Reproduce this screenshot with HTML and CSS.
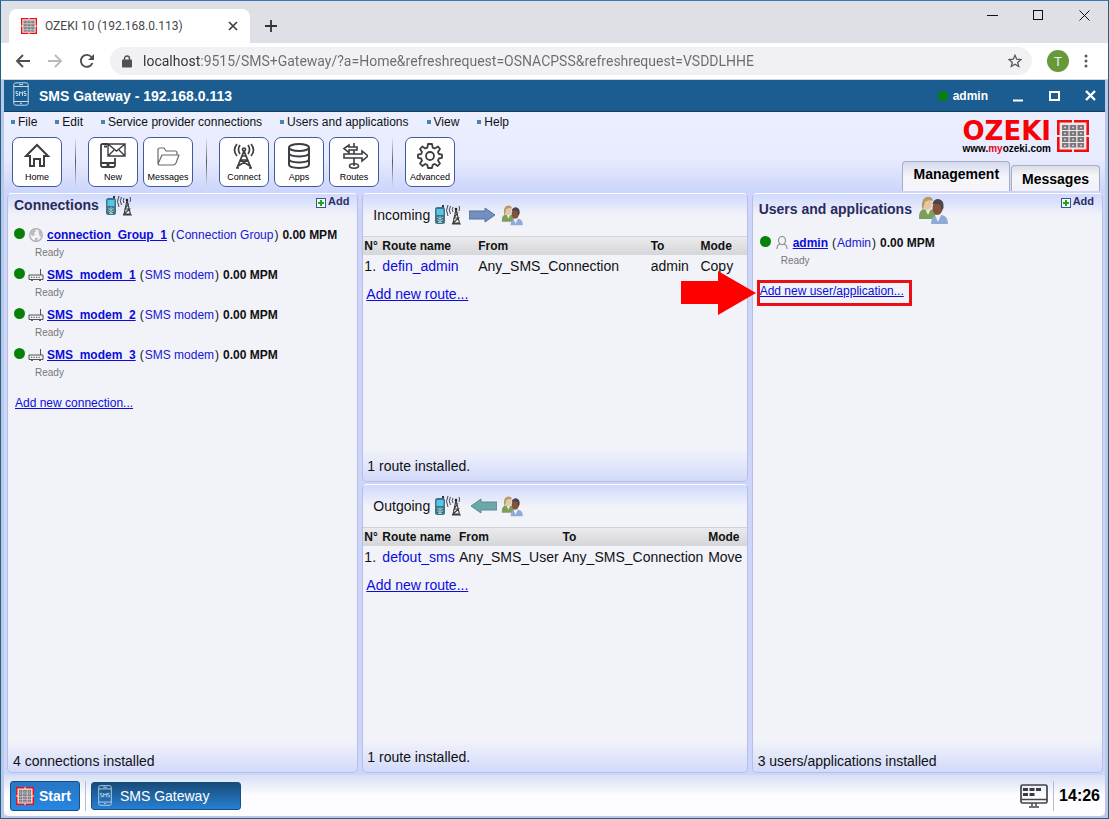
FILE: index.html
```html
<!DOCTYPE html>
<html lang="en">
<head>
<meta charset="utf-8">
<title>OZEKI 10 (192.168.0.113)</title>
<link rel="stylesheet" href="styles.css">
</head>
<body>
<svg class="defs" aria-hidden="true">
  <symbol id="keypad" viewBox="0 0 32 32">
    <rect width="32" height="32" fill="#f3e4e6"/>
    <path d="M1.300 15V1.300H15M17 1.300H30.700V15M30.700 17V30.700H17M15 30.700H1.300V17" fill="none" stroke="#f00d12" stroke-width="2.600"/>
    <g fill="#77777d"><path d="M5 5h6.500v5H5zM12.700 5h6.500v5h-6.500zM20.500 5h6.500v5h-6.500zM5 11h6.500v5H5zM12.700 11h6.500v5h-6.500zM20.500 11h6.500v5h-6.500zM5 17h6.500v5H5zM12.700 17h6.500v5h-6.500zM20.500 17h6.500v5h-6.500zM5 23h6.500v4.500H5zM12.700 23h6.500v4.500h-6.500zM20.500 23h6.500v4.500h-6.500z"/></g>
    <path d="M7 7.500h2M15 7.500h2M23 7.500h2M7 13.500h2M15 13.500h2M23 13.500h2M7 19.500h2M15 19.500h2M23 19.500h2M7 25.500h2M15 25.500h2M23 25.500h2" stroke="#d0d0d4" stroke-width="1.600"/>
  </symbol>
  <symbol id="sms" viewBox="0 0 16 24">
    <g fill="none" stroke="#c4dcec"><rect x=".8" y=".8" width="14.400" height="22.400" rx="2"/><path d="M1 4.500h14M1 19.500h14M6 2.600h4M7 21.300h2"/></g>
    <g fill="none" stroke="#c4dcec" stroke-width=".9"><path d="M5 9.500H3v2h2v2H3M6.500 14V9.500L8 11.500l1.500-2V14M13 9.500h-2v2h2v2h-2"/></g>
  </symbol>
  <symbol id="people" viewBox="0 0 30 29">
    <path d="M1 21q0-7 5-8l4 2 5-2q3 1 3 7v3H1z" fill="#7e9f5a"/>
    <path d="M7 12h6l-3 7z" fill="#f2efe6"/>
    <ellipse cx="9.500" cy="7.500" rx="4.500" ry="6.500" fill="#e6c7a4"/>
    <path d="M4 12Q3 2 9 1q5-1 6 4-4-2-8 1-1 4-2 8z" fill="#b99b62"/>
    <path d="M13 28q0-8 6-9h5q6 1 6 9z" fill="#8eabd8"/>
    <path d="M17 19h6l-3 7z" fill="#eef2fa"/>
    <ellipse cx="19.500" cy="12" rx="5" ry="7" fill="#84513c"/>
    <path d="M14.500 8q1-5 6-5 6 1 5 9l-2 3-1-6q-4-2-8-1z" fill="#494548"/>
  </symbol>
  <symbol id="provider" viewBox="0 0 26 20">
    <path d="M7 0h2v4H7z" fill="#24363e"/>
    <rect x="0" y="2" width="10" height="17" rx="2.500" fill="#3e7484"/>
    <rect x="1.500" y="4" width="7" height="6" fill="#55c5e8"/>
    <path d="M2 12l3 2 3-2M2 14.500l3 2 3-2M3 17.500h4M5 11v7" fill="none" stroke="#b3e1e5" stroke-width=".8"/>
    <g fill="none" stroke="#333" stroke-width=".9"><path d="M18 2q-1.500 2.500 0 5M15.500 1q-2.500 3.500 0 8M13 0q-3 5 0 11M24 1q1.200 2 0 5"/></g>
    <g fill="none" stroke="#3c3c3c" stroke-width="1.100"><path d="M21 4l-3 14.500M21 4l3.500 14.500M20 8h2.500l-3.500 5h4.500L18 18h6.500M17 19h9"/></g>
    <circle cx="21" cy="4" r="1.300" fill="#222"/>
  </symbol>
  <symbol id="modem" viewBox="0 0 16 12">
    <path d="M1 6h14v4.500H1zM12.500 6V0" fill="none" stroke="#555"/>
    <path d="M3 8.300h1.300M5.500 8.300h1.300M8 8.300h1.300M10.500 8.300h1.300M3 11.300h2M11 11.300h2" stroke="#444"/>
  </symbol>
  <symbol id="plus" viewBox="0 0 10 10">
    <rect x=".5" y=".5" width="9" height="9" fill="#f6fff4" stroke="#35588c"/>
    <path d="M5 2v6M2 5h6" stroke="#22a61d" stroke-width="2"/>
  </symbol>
</svg>

<header class="browser">
  <div class="tabstrip">
    <div class="browser-tab">
      <svg class="ico16"><use href="#keypad"/></svg>
      <span class="tab-title">OZEKI 10 (192.168.0.113)</span>
      <button class="plain" aria-label="Close tab"><svg width="10" height="10" viewBox="0 0 10 10"><path d="M1 1l8 8M9 1L1 9" stroke="#3c4043" stroke-width="1.700"/></svg></button>
    </div>
    <button class="plain new-tab" aria-label="New tab"><svg width="12" height="12" viewBox="0 0 12 12"><path d="M6 0v12M0 6h12" stroke="#333" stroke-width="1.800"/></svg></button>
    <div class="window-buttons">
      <button class="plain" aria-label="Minimize"><svg width="11" height="11"><path d="M0 5.500h11" stroke="#111"/></svg></button>
      <button class="plain" aria-label="Maximize"><svg width="11" height="11"><rect x=".5" y=".5" width="9" height="9" fill="none" stroke="#111"/></svg></button>
      <button class="plain" aria-label="Close"><svg width="11" height="11"><path d="M.5.500l10 10M10.500.500l-10 10" stroke="#111"/></svg></button>
    </div>
  </div>
  <div class="navbar">
    <button class="plain" aria-label="Back"><svg width="16" height="16" viewBox="0 0 16 16"><path d="M15 8H2M8 2L2 8l6 6" fill="none" stroke="#4c4f53" stroke-width="1.900"/></svg></button>
    <button class="plain" aria-label="Forward"><svg width="16" height="16" viewBox="0 0 16 16"><path d="M1 8h13M8 2l6 6-6 6" fill="none" stroke="#b9babd" stroke-width="1.900"/></svg></button>
    <button class="plain" aria-label="Reload"><svg width="16" height="16" viewBox="0 0 16 16"><path d="M13.500 10A6 6 0 1 1 12.500 4" fill="none" stroke="#4c4f53" stroke-width="1.900"/><path d="M15 1v6H9z" fill="#4c4f53"/></svg></button>
    <div class="address">
      <svg width="10" height="13" viewBox="0 0 10 13"><rect y="4.500" width="10" height="8" rx="1" fill="#4d5054"/><path d="M2.500 5V3.500a2.500 2.500 0 0 1 5 0V5" fill="none" stroke="#4d5054" stroke-width="1.400"/></svg>
      <input type="text" aria-label="Address" value="localhost:9515/SMS+Gateway/?a=Home&amp;refreshrequest=OSNACPSS&amp;refreshrequest=VSDDLHHE">
      <button class="plain" aria-label="Bookmark"><svg width="14" height="14" viewBox="0 0 14 14"><path d="M7 1.300l1.700 3.900 4.200.4-3.200 2.800 1 4.100L7 10.300l-3.700 2.200 1-4.100L1.100 5.600l4.200-.4z" fill="none" stroke="#55585c" stroke-width="1.300"/></svg></button>
    </div>
    <button class="avatar">T</button>
    <button class="plain" aria-label="Menu"><svg width="4" height="14" viewBox="0 0 4 14"><g fill="#55585c"><circle cx="2" cy="2" r="1.500"/><circle cx="2" cy="7" r="1.500"/><circle cx="2" cy="12" r="1.500"/></g></svg></button>
  </div>
</header>

<main class="app">
  <div class="titlebar">
    <svg width="16" height="24"><use href="#sms"/></svg>
    <h1>SMS Gateway - 192.168.0.113</h1>
    <span class="user"><i class="dot"></i>admin</span>
    <button class="plain" aria-label="Minimize window"><svg width="12" height="12"><path d="M1 10.500h10" stroke="#fff" stroke-width="2"/></svg></button>
    <button class="plain" aria-label="Maximize window"><svg width="12" height="12"><rect x="2" y="2" width="9" height="8" fill="none" stroke="#fff" stroke-width="2"/></svg></button>
    <button class="plain" aria-label="Close window"><svg width="12" height="12"><path d="M2 1l9 9M11 1l-9 9" stroke="#fff" stroke-width="2.400"/></svg></button>
  </div>

  <div class="topbar">
    <div class="tools">
      <nav class="menu">
        <a>File</a><a>Edit</a><a>Service provider connections</a><a>Users and applications</a><a>View</a><a>Help</a>
      </nav>
      <div class="toolbar">
        <button class="tool"><svg viewBox="0 0 28 28"><path d="M3 14L14 3l11 11h-4v10h-4v-7h-6v7H7V14z" fill="none" stroke="#3d3d42" stroke-width="2"/></svg>Home</button>
        <i class="sep"></i>
        <button class="tool"><svg viewBox="0 0 28 28"><g fill="none" stroke="#3d3d42" stroke-width="1.800"><path d="M9 2H3.500Q2 2 2 3.500v20Q2 25 3.500 25h11q1.500 0 1.500-1.500V16M2 21h14M7.500 23h3M5 4.500h3"/><path d="M9 2h17v12H9zM9 2l8.500 7L26 2M9 14l6-6M26 14l-6-6" stroke-width="1.400"/></g></svg>New</button>
        <button class="tool"><svg viewBox="0 0 28 28"><path d="M4 22V8q0-2 2-2h4l2 3h9q2 0 2 2v2M4 22l4-9h17l-3 8q-1 2-3 2H5z" fill="none" stroke="#696970" stroke-width="1.200" stroke-linejoin="round"/></svg>Messages</button>
        <i class="sep"></i>
        <button class="tool"><svg viewBox="0 0 28 28"><g fill="none" stroke="#3d3d42" stroke-width="1.700"><path d="M14 9L7 26M14 9l7 17M10 18h8M11.500 14h5M10 18l10 6M18 18L8 24M6 26h3M19 26h3"/><circle cx="14" cy="7.500" r="1.500"/><path d="M10 3q-3 4.500 0 9M7 2q-5 6 0 12M18 3q3 4.500 0 9M21 2q5 6 0 12"/></g></svg>Connect</button>
        <button class="tool"><svg viewBox="0 0 28 28"><g fill="none" stroke="#3d3d42" stroke-width="2"><ellipse cx="14" cy="5.500" rx="10" ry="3.500"/><path d="M4 5.500v17C4 27 24 27 24 22.500v-17M4 11c0 4.500 20 4.500 20 0M4 17c0 4.500 20 4.500 20 0"/></g></svg>Apps</button>
        <button class="tool"><svg viewBox="0 0 28 28"><g fill="#fff" stroke="#3d3d42" stroke-width="1.600"><ellipse cx="14" cy="24" rx="4.500" ry="2.200"/><path d="M14 1v23"/><path d="M4 12h18V9l6 5-6 5v-3H4zM17 8H9v2.500L4 6.500 9 3v2h8z"/></g></svg>Routes</button>
        <i class="sep"></i>
        <button class="tool"><svg viewBox="0 0 28 28"><g fill="none" stroke="#3d3d42" stroke-width="1.800" stroke-linejoin="round"><path d="M12 2h4l.7 3.600 2 .9L22 4.500 24 7l-2 3 .8 2 3.200.6v3.200l-3.200.7-.8 2 2 3-2.300 2.500-3-2-2 .8L16 26h-4l-.7-3.200-2-.8-3 2L4 21.500l2-3-.8-2-3.200-.7v-3.200l3.200-.6.8-2L4 7l2.300-2.500 3 2 2-.9z"/><circle cx="14" cy="14" r="4"/></g></svg>Advanced</button>
      </div>
    </div>
    <div class="brand">
      <a class="logo">
        <span class="logo-text"><b>OZEKI</b><small>www.<em>my</em>ozeki.com</small></span>
        <svg width="32" height="32"><use href="#keypad"/></svg>
      </a>
      <div class="view-tabs">
        <button class="view-tab active">Management</button>
        <button class="view-tab">Messages</button>
      </div>
    </div>
  </div>

  <div class="columns">
    <section class="panel side">
      <header class="panel-head">
        <h2>Connections</h2><svg width="26" height="20"><use href="#provider"/></svg>
        <a class="add"><svg width="10" height="10"><use href="#plus"/></svg>Add</a>
      </header>
      <ul class="list">
        <li><div class="entry"><i class="dot"></i><svg width="16" height="16" viewBox="0 0 16 16"><circle cx="8" cy="8" r="6.300" fill="none" stroke="#aaa" stroke-width="1.200"/><path d="M4 3l3-1 1 2-2 2 1 2-3 1-2-3zM10 3l3 2 1 4-2 1-1-3zM7 11l3 0-1 3H7z" fill="#bbb"/></svg><a href="#">connection_Group_1</a><span class="kind">(<i>Connection Group</i>)</span><b>0.00 MPM</b></div><p>Ready</p></li>
        <li><div class="entry"><i class="dot"></i><svg width="16" height="16" viewBox="0 -2 16 16"><use href="#modem" width="16" height="12"/></svg><a href="#">SMS_modem_1</a><span class="kind">(<i>SMS modem</i>)</span><b>0.00 MPM</b></div><p>Ready</p></li>
        <li><div class="entry"><i class="dot"></i><svg width="16" height="16" viewBox="0 -2 16 16"><use href="#modem" width="16" height="12"/></svg><a href="#">SMS_modem_2</a><span class="kind">(<i>SMS modem</i>)</span><b>0.00 MPM</b></div><p>Ready</p></li>
        <li><div class="entry"><i class="dot"></i><svg width="16" height="16" viewBox="0 -2 16 16"><use href="#modem" width="16" height="12"/></svg><a href="#">SMS_modem_3</a><span class="kind">(<i>SMS modem</i>)</span><b>0.00 MPM</b></div><p>Ready</p></li>
      </ul>
      <a class="add-new" href="#">Add new connection...</a>
      <footer>4 connections installed</footer>
    </section>

    <div class="middle">
      <section class="panel">
        <header class="route-head">Incoming
          <svg width="26" height="20"><use href="#provider"/></svg>
          <svg width="26" height="16" viewBox="0 0 26 16"><path d="M0 4h16V1l10 7-10 7v-3H0z" fill="#7190bd" stroke="#58739b"/></svg>
          <svg width="22" height="21"><use href="#people"/></svg>
        </header>
        <table class="routes incoming">
          <thead><tr><th>N°</th><th>Route name</th><th>From</th><th>To</th><th>Mode</th></tr></thead>
          <tbody><tr><td>1.</td><td><a href="#">defin_admin</a></td><td>Any_SMS_Connection</td><td>admin</td><td>Copy</td></tr></tbody>
        </table>
        <a class="add-route" href="#">Add new route...</a>
        <footer>1 route installed.</footer>
      </section>
      <section class="panel">
        <header class="route-head">Outgoing
          <svg width="26" height="20"><use href="#provider"/></svg>
          <svg class="back" width="26" height="16" viewBox="0 0 26 16"><path d="M26 4H10V1L0 8l10 7v-3h16z" fill="#6aa9a8" stroke="#5a8990"/></svg>
          <svg width="22" height="21"><use href="#people"/></svg>
        </header>
        <table class="routes outgoing">
          <thead><tr><th>N°</th><th>Route name</th><th>From</th><th>To</th><th>Mode</th></tr></thead>
          <tbody><tr><td>1.</td><td><a href="#">defout_sms</a></td><td>Any_SMS_User</td><td>Any_SMS_Connection</td><td>Move</td></tr></tbody>
        </table>
        <a class="add-route" href="#">Add new route...</a>
        <footer>1 route installed.</footer>
      </section>
    </div>

    <section class="panel side users">
      <header class="panel-head">
        <h2>Users and applications</h2><svg width="30" height="29"><use href="#people"/></svg>
        <a class="add"><svg width="10" height="10"><use href="#plus"/></svg>Add</a>
      </header>
      <ul class="list">
        <li><div class="entry"><i class="dot"></i><svg width="16" height="16" viewBox="0 0 16 16"><g fill="none" stroke="#888" stroke-width="1.100"><ellipse cx="8" cy="5.500" rx="3.500" ry="4"/><path d="M3 14q0-4 3-5M13 14q0-4-3-5"/></g></svg><a href="#">admin</a><span class="kind">(<i>Admin</i>)</span><b>0.00 MPM</b></div><p>Ready</p></li>
      </ul>
      <div class="callout">
        <a href="#">Add new user/application...</a>
        <svg class="pointer" width="76" height="46" viewBox="0 0 76 46"><path d="M0 11h37V1l38 22-38 22V34H0z" fill="#fe0000"/></svg>
      </div>
      <footer>3 users/applications installed</footer>
    </section>
  </div>

  <div class="taskbar">
    <button class="start"><svg class="ico18"><use href="#keypad"/></svg>Start</button>
    <i class="task-sep"></i>
    <button class="task"><svg width="14" height="21"><use href="#sms"/></svg>SMS Gateway</button>
    <svg class="desktop" width="28" height="24" viewBox="0 0 28 24"><rect x="1" y="1" width="26" height="18" rx="1.500" fill="none" stroke="#44444a" stroke-width="1.700"/><path d="M1 15.500h26M12 19v3M16 19v3M9 23h10" stroke="#44444a" stroke-width="1.500"/><path d="M3 4h5v3H3zM9.500 4h5v3h-5zM16 4h5v3h-5zM3 9h5v3H3zM9.500 9h5v3h-5z" fill="#3b3b40"/></svg>
    <time>14:26</time>
  </div>
</main>
</body>
</html>
```
FILE: styles.css
```css
* { box-sizing: border-box; }

body {
  margin: 0;
  min-height: 100vh;
  display: flex;
  flex-direction: column;
  border: 1px solid #1f6283;
  border-top-color: #3a78b5;
  background: #fff;
  color: #111;
  font-family: "Liberation Sans", Arial, sans-serif;
  font-size: 14px;
}

.defs { position: absolute; width: 0; height: 0; }
svg { display: block; flex: none; }
h1, h2, p, ul { margin: 0; padding: 0; }
button { font: inherit; }
a { color: #0c0cdc; }
.plain { display: flex; padding: 0; border: 0; background: none; }
.dot { width: 11px; height: 11px; border-radius: 50%; background: #078007; }
.ico16 { width: 16px; height: 16px; }
.ico18 { width: 18px; height: 18px; }

/* Browser frame */
.tabstrip {
  display: flex;
  align-items: flex-end;
  height: 42px;
  padding: 0 18px 0 8px;
  background: #dfe0e6;
}
.browser-tab {
  display: flex;
  align-items: center;
  gap: 8px;
  width: 241px;
  height: 34px;
  padding: 0 12px;
  border-radius: 8px 8px 0 0;
  background: #fff;
}
.tab-title { flex: 1; color: #45474a; font: 12px Roboto, sans-serif; white-space: nowrap; }
.new-tab { margin: 0 0 11px 15px; }
.window-buttons { display: flex; gap: 35px; margin: 0 0 22px auto; }
.navbar {
  display: flex;
  align-items: center;
  gap: 16px;
  height: 37px;
  padding: 0 20px 0 14px;
  border-bottom: 1px solid #d3d5dc;
}
.address {
  flex: 1;
  display: flex;
  align-items: center;
  gap: 11px;
  height: 28px;
  margin: 0 -1px;
  padding: 0 10px 0 12px;
  border-radius: 14px;
  background: #f1f1f4;
}
.address input {
  flex: 1;
  min-width: 0;
  padding: 0;
  border: 0;
  background: linear-gradient(to right, #303236 58px, #696b70 58px) text;
  color: transparent;
  font: 14px Roboto, sans-serif;
}
.avatar {
  width: 22px;
  height: 22px;
  margin-right: -1px;
  padding: 0;
  border: 0;
  border-radius: 50%;
  background: #65993a;
  color: #eef5e6;
  font-size: 13px;
}

/* Application window */
.app {
  flex: 1;
  display: flex;
  flex-direction: column;
  border: solid #bcc8e9;
  border-width: 0 3px 2px;
  background: #cdd5fa;
}
.titlebar {
  display: flex;
  align-items: center;
  gap: 24px;
  height: 32px;
  padding: 0 9px 4px;
  border-bottom: 1px solid #143e5e;
  background: #1b5d91;
  color: #fff;
}
.titlebar h1 { flex: 1; margin: 4px 0 0 -14px; font-size: 14px; line-height: 16px; }
.titlebar .plain, .titlebar .user { margin-top: 4px; }
.titlebar .user { display: flex; align-items: center; gap: 5px; font-size: 12px; font-weight: bold; }
.titlebar .dot { width: 10px; height: 10px; }

.topbar {
  display: flex;
  justify-content: space-between;
  height: 79px;
  background: linear-gradient(#ecefff, #e8ebfe 60%, #ccd5fb);
}
.menu { display: flex; gap: 18px; padding: 2px 0 0 7px; font-size: 12px; line-height: 16px; }
.menu a { display: flex; align-items: center; gap: 3px; color: #111; }
.menu a::before { content: ""; width: 4px; height: 4px; background: #4782b4; }
.toolbar { display: flex; gap: 5px; padding: 7px 0 0 8px; }
.tool {
  display: flex;
  flex-direction: column;
  align-items: center;
  justify-content: space-between;
  width: 50px;
  height: 50px;
  padding: 4px 0 3px;
  border: 1px solid #3e5b9c;
  border-radius: 7px;
  background: #fff;
  color: #000;
  font-size: 9px;
  line-height: 11px;
}
.tool svg { width: 28px; height: 28px; }
.sep { width: 1px; margin: 0 7px 0 8px; background: linear-gradient(transparent, #55596c, transparent); }
.brand { display: flex; flex-direction: column; justify-content: space-between; padding-right: 5px; }
.logo { display: flex; justify-content: flex-end; gap: 6px; padding: 8px 11px 0 0; color: #000; }
.logo-text { display: flex; flex-direction: column; }
.logo-text b { color: #f80006; font: bold 26px/22px "DejaVu Sans", sans-serif; }
.logo-text small { font-size: 10px; font-weight: bold; line-height: 14px; }
.logo-text em { color: #e1061b; font-style: normal; }
.view-tabs { display: flex; align-items: flex-end; gap: 1px; }
.view-tab {
  height: 26px;
  padding: 0 10px;
  border: 1px solid #a5acc5;
  border-bottom: 0;
  border-radius: 4px 4px 0 0;
  background: linear-gradient(#dcdde5, #f6f6f9 40%, #f0f1f8);
  color: #000;
  font-size: 14px;
  font-weight: bold;
}
.view-tab.active { height: 30px; padding-bottom: 5px; background: linear-gradient(#d5d9ee, #f5f5fa 50%); }

.columns { flex: 1; display: flex; gap: 4px; padding: 2px 2px 2px 3px; }
.side { flex: 350; }
.middle { flex: 386; display: flex; flex-direction: column; gap: 2px; }
.middle .panel { flex: 1; }
.panel {
  display: flex;
  flex-direction: column;
  min-width: 0;
  border: 1px solid #b7c0e4;
  border-top-color: #fff;
  border-radius: 5px;
  background: linear-gradient(#cfd9fd, #f2f3f9 22px, #f2f3f9 calc(100% - 32px), #d2dafb);
}
.panel footer { margin-top: auto; padding: 0 4px 7px; line-height: 16px; }
.panel.side footer { padding: 0 5px 3px; }
.panel-head { display: flex; align-items: flex-start; gap: 7px; padding: 2px 8px 0 6px; }
.panel-head h2 { margin-top: 1px; color: #2a2a5c; font-size: 14px; line-height: 16px; }
.users .panel-head { gap: 6px; padding-left: 6px; }
.users .panel-head h2 { margin-top: 5px; }
.add { display: flex; align-items: center; gap: 2px; margin: -3px 0 0 auto; color: #2c2f66; font-size: 11px; font-weight: bold; line-height: 14px; }
.add svg { margin-top: 5px; }
.list { list-style: none; padding: 10px 6px 0; font-size: 12px; }
.users .list { padding: 9px 7px 0; }
.list li { height: 40px; }
.entry { display: flex; align-items: center; gap: 4px; line-height: 18px; }
.entry .dot { margin: -3px -1px 0 0; }
.entry a, .entry b { font-weight: bold; }
.entry a { margin-left: -1px; }
.kind { display: flex; gap: 1px; }
.kind i { color: #1818d0; font-style: normal; }
.list p { padding: 3px 0 0 21px; color: #777; font-size: 10px; line-height: 12px; }
.add-new { align-self: flex-start; padding: 10px 7px; font-size: 12px; line-height: 14px; }
.callout {
  position: relative;
  align-self: flex-start;
  height: 26px;
  margin: 6px 0 0 4px;
  padding-right: 5px;
  border: 3px solid #ec0e17;
  font-size: 12px;
  line-height: 17px;
}
.pointer { position: absolute; right: calc(100% + 3px); top: -13px; }

.route-head { display: flex; align-items: center; gap: 8px; height: 42px; padding-left: 10px; }
.route-head svg:first-of-type { margin-left: -3px; }
.route-head svg:last-of-type { margin-left: -2px; }
.route-head .back { margin-left: 2px; }
.route-head .back + svg { margin-left: -4px; }
.routes { width: 100%; border-spacing: 0; table-layout: fixed; white-space: nowrap; }
.routes th {
  height: 19px;
  padding: 0 0 0 1px;
  border-top: 1px solid #d0d2d6;
  background: linear-gradient(#ebebed, #d5d6d9);
  font-size: 12px;
  text-align: left;
}
.routes td { height: 22px; padding: 0 0 0 1px; }
.routes td a { text-decoration: none; }
.routes th:nth-child(1) { width: 18px; }
.incoming th:nth-child(2) { width: 25%; }
.incoming th:nth-child(3) { width: 45%; }
.incoming th:nth-child(4) { width: 13%; }
.outgoing th:nth-child(2) { width: 20%; }
.outgoing th:nth-child(3) { width: 27%; }
.outgoing th:nth-child(4) { width: 38%; }
.add-route { align-self: flex-start; padding: 9px 3px; line-height: 16px; }

.taskbar {
  display: flex;
  align-items: center;
  gap: 5px;
  height: 41px;
  padding: 0 5px 0 6px;
  border-radius: 0 0 5px 5px;
  background: linear-gradient(#d6dff5, #fdfdff 50%);
}
.start, .task {
  display: flex;
  align-items: center;
  gap: 5px;
  height: 30px;
  padding: 0 8px 0 5px;
  border: 1px solid #174f84;
  border-radius: 3px;
  background: linear-gradient(#2777c4, #2686e2);
  color: #fff;
}
.start { font-weight: bold; }
.task { gap: 8px; width: 150px; height: 28px; padding-left: 6px; background: linear-gradient(#174c79, #226bae 60%, #2580d4); }
.task-sep { width: 1px; height: 30px; background: #b6bdd0; }
.desktop { margin-left: auto; }
.taskbar time { padding: 6px 0 6px 5px; border-left: 1px solid #b6bdd0; color: #000; font-size: 16px; font-weight: bold; line-height: 18px; }
```
